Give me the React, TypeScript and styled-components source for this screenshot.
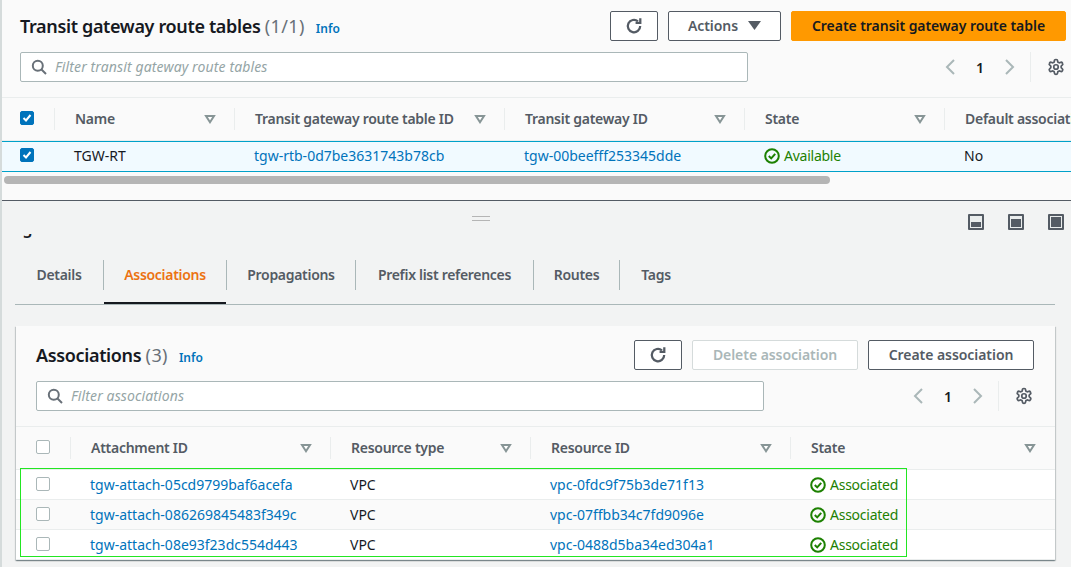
import React from "react";
import styled, { createGlobalStyle } from "styled-components";

const Global = createGlobalStyle`
  html, body { margin: 0; padding: 0; background: #f2f3f3; }
  body { font-family: "Noto Sans", "Open Sans", sans-serif; font-size: 14px; color: #16191f; }
`;

const Page = styled.div`
  position: relative;
  width: 1071px;
  height: 567px;
  overflow: hidden;
  background: #f2f3f3;
  border-left: 2px solid #d5dbdb;
  box-sizing: border-box;
`;

const TopPanel = styled.section`
  height: 201px;
  margin-left: -2px;
  box-sizing: border-box;
  background: #fafafa;
  border-bottom: 1px solid #545b64;
  border-left: 2px solid #d5dbdb;
  display: flex;
  flex-direction: column;
  overflow: hidden;
`;

const Header = styled.div<{ $pl: number; $pr: number; $pt: number }>`
  display: flex;
  align-items: center;
  justify-content: space-between;
  padding: ${(p) => p.$pt}px ${(p) => p.$pr}px 0 ${(p) => p.$pl}px;
  height: 30px;
`;

const TitleBlock = styled.div`
  display: flex;
  align-items: baseline;
  white-space: nowrap;
`;

const Title = styled.h2<{ $size: number }>`
  margin: 0;
  font-size: ${(p) => p.$size}px;
  line-height: 24px;
  font-weight: 600;
  letter-spacing: -0.35px;
  color: #16191f;
`;

const Count = styled.span`
  font-weight: 400;
  letter-spacing: 0.4px;
  color: #687078;
`;

const Info = styled.a`
  margin-left: 11px;
  font-size: 12px;
  font-weight: 600;
  color: #0073bb;
`;

const Actions = styled.div`
  display: flex;
  gap: 10px;
`;

const Button = styled.button<{ $w: number; $kind?: "primary" | "disabled" }>`
  width: ${(p) => p.$w}px;
  height: 30px;
  box-sizing: border-box;
  display: inline-flex;
  align-items: center;
  justify-content: center;
  gap: 10px;
  padding: 0 0 1px;
  font-family: inherit;
  font-size: 14px;
  font-weight: 600;
  letter-spacing: -0.05px;
  border-radius: 2px;
  border: 1px solid
    ${(p) => (p.$kind === "primary" ? "#ff9900" : p.$kind === "disabled" ? "#d5dbdb" : "#545b64")};
  background: ${(p) => (p.$kind === "primary" ? "#ff9900" : "#ffffff")};
  color: ${(p) => (p.$kind === "primary" ? "#16191f" : p.$kind === "disabled" ? "#aab7b8" : "#545b64")};
`;

const FilterRow = styled.div<{ $mt: number; $pl: number }>`
  display: flex;
  align-items: center;
  margin-top: ${(p) => p.$mt}px;
  padding-left: ${(p) => p.$pl}px;
  height: 30px;
`;

const FilterBox = styled.div`
  width: 728px;
  height: 30px;
  box-sizing: border-box;
  display: flex;
  align-items: center;
  gap: 8px;
  padding: 0 0 1px 10px;
  background: #ffffff;
  border: 1px solid #aab7b8;
  border-radius: 2px;
  font-style: italic;
  font-size: 14px;
  letter-spacing: 0.12px;
  color: #95a5a6;
`;

const Pager = styled.div<{ $ml: number }>`
  display: flex;
  align-items: center;
  height: 30px;
  margin-left: ${(p) => p.$ml}px;
`;

const PageNum = styled.span`
  width: 46px;
  text-align: center;
  font-weight: 600;
  color: #16191f;
`;

const PagerSep = styled.span`
  width: 1px;
  height: 30px;
  margin: 0 16px 0 13px;
  background: #eaeded;
`;

const Table = styled.div<{ $mt: number }>`
  margin-top: ${(p) => p.$mt}px;
  border-top: 1px solid #eaeded;
  overflow: hidden;
`;

const HeadRow = styled.div<{ $cols: string }>`
  display: grid;
  grid-template-columns: ${(p) => p.$cols};
  align-items: center;
  height: 42px;
  border-bottom: 1px solid #eaeded;
  background: #fafafa;
`;

const HeadCell = styled.div<{ $last?: boolean }>`
  display: flex;
  align-items: center;
  justify-content: space-between;
  height: 22px;
  box-sizing: border-box;
  padding: 0 18px 0 20px;
  border-right: ${(p) => (p.$last ? "none" : "1px solid #eaeded")};
  font-weight: 600;
  letter-spacing: -0.27px;
  color: #545b64;
  white-space: nowrap;
  line-height: 20px;
`;

const HeadLabel = styled.span`
  margin-top: -1px;
`;

const CheckCell = styled.div<{ $pl: number; $sep?: boolean }>`
  display: flex;
  align-items: center;
  height: 22px;
  box-sizing: border-box;
  padding-left: ${(p) => p.$pl}px;
  border-right: ${(p) => (p.$sep ? "1px solid #eaeded" : "none")};
`;

const Check = styled.span<{ $on?: boolean }>`
  display: inline-flex;
  align-items: center;
  justify-content: center;
  box-sizing: border-box;
  width: 14px;
  height: 14px;
  margin-top: -2px;
  border-radius: 2px;
  border: 1px solid ${(p) => (p.$on ? "#0073bb" : "#aab7b8")};
  background: ${(p) => (p.$on ? "#0073bb" : "#ffffff")};
`;

const BodyRow = styled.div<{ $cols: string; $selected?: boolean; $alt?: boolean; $h: number }>`
  display: grid;
  grid-template-columns: ${(p) => p.$cols};
  align-items: center;
  height: ${(p) => p.$h}px;
  box-sizing: border-box;
  padding-bottom: ${(p) => (p.$selected ? "1px" : "0")};
  background: ${(p) => (p.$selected ? "#f1faff" : p.$alt ? "#fafafa" : "#ffffff")};
  border-top: ${(p) => (p.$selected ? "1px solid #00a1c9" : "none")};
  border-bottom: 1px solid ${(p) => (p.$selected ? "#00a1c9" : "#eaeded")};
  border-left: ${(p) => (p.$selected ? "1px solid #00a1c9" : "none")};
  margin-left: ${(p) => (p.$selected ? "-1px" : "0")};
`;

const Cell = styled.div`
  padding-left: 19px;
  white-space: nowrap;
  line-height: 20px;
`;

const LinkText = styled.a`
  color: #0073bb;
`;

const Status = styled.span`
  display: inline-flex;
  align-items: center;
  gap: 4px;
  vertical-align: top;
  letter-spacing: -0.25px;
  color: #1d8102;
`;

const Track = styled.div`
  height: 8px;
  margin-top: 4px;
  padding-left: 2px;
`;

const Thumb = styled.div`
  width: 826px;
  height: 8px;
  border-radius: 4px;
  background: #b5b5b5;
`;

const Bottom = styled.section`
  padding-left: 13px;
`;

const HandleBar = styled.div`
  display: flex;
  align-items: center;
  height: 28px;
  padding-right: 7px;
`;

const Handle = styled.div`
  width: 18px;
  height: 3px;
  margin: 6px 0 0 457px;
  border-top: 1px solid #b5b5b5;
  border-bottom: 1px solid #b5b5b5;
`;

const ViewIcons = styled.div`
  margin-left: auto;
  display: flex;
  gap: 24px;
  margin-top: 14px;
`;

const Clip = styled.div`
  height: 4px;
  margin-top: 5px;
  overflow: hidden;
  padding-left: 1px;
`;

const ClipText = styled.div`
  margin-top: -16px;
  font-size: 16px;
  font-weight: 600;
  line-height: 20px;
  white-space: nowrap;
  color: #16191f;
`;

const Tabs = styled.div`
  display: flex;
  height: 44px;
  margin-top: 22px;
  border-bottom: 1px solid #aab7b8;
  width: 1040px;
`;

const Tab = styled.div<{ $active?: boolean; $w: number; $last?: boolean }>`
  position: relative;
  width: ${(p) => p.$w}px;
  height: 30px;
  box-sizing: border-box;
  display: flex;
  align-items: center;
  justify-content: center;
  padding-bottom: 1px;
  font-weight: 600;
  letter-spacing: -0.3px;
  color: ${(p) => (p.$active ? "#ec7211" : "#545b64")};
  border-right: ${(p) => (p.$last ? "none" : "1px solid #aab7b8")};
  white-space: nowrap;
  &::after {
    content: "";
    display: ${(p) => (p.$active ? "block" : "none")};
    position: absolute;
    left: 0;
    right: 0;
    top: 42px;
    height: 2px;
    background: #16191f;
  }
`;

const Card = styled.div`
  margin: 21px 0 0 1px;
  width: 1039px;
  height: 234px;
  background: #fafafa;
  box-shadow: 0 1px 1px 0 rgba(0, 28, 36, 0.3), 1px 1px 1px 0 rgba(0, 28, 36, 0.15),
    -1px 1px 1px 0 rgba(0, 28, 36, 0.15);
  overflow: hidden;
`;

const Highlight = styled.div`
  position: absolute;
  left: 18px;
  top: 468px;
  width: 887px;
  height: 89px;
  box-sizing: border-box;
  border: 1px solid #22e622;
  pointer-events: none;
`;

const RefreshIcon = () => (
  <svg width="18" height="18" viewBox="0 0 16 16" fill="none" stroke="#545b64" strokeWidth="2">
    <path d="M13.5 8a5.5 5.5 0 1 1-2-4.2" />
    <path d="M13.6 1v4.2H9.4" />
  </svg>
);

const SearchIcon = () => (
  <svg width="16" height="16" viewBox="0 0 16 16" fill="none" stroke="#687078" strokeWidth="2">
    <circle cx="6.8" cy="6.8" r="5" />
    <path d="M10.5 10.5 15 15" />
  </svg>
);

const Gear = () => (
  <svg width="18" height="18" viewBox="0 0 24 24" fill="none" stroke="#545b64" strokeWidth="2.3" strokeLinejoin="round">
    <path d="M12.2 2h-.4a2 2 0 0 0-2 2v.2a2 2 0 0 1-1 1.7l-.4.2a2 2 0 0 1-2 0l-.2-.1a2 2 0 0 0-2.7.7l-.2.4a2 2 0 0 0 .7 2.7l.2.1a2 2 0 0 1 1 1.7v.5a2 2 0 0 1-1 1.7l-.2.1a2 2 0 0 0-.7 2.7l.2.4a2 2 0 0 0 2.7.7l.2-.1a2 2 0 0 1 2 0l.4.2a2 2 0 0 1 1 1.7v.2a2 2 0 0 0 2 2h.4a2 2 0 0 0 2-2v-.2a2 2 0 0 1 1-1.7l.4-.2a2 2 0 0 1 2 0l.2.1a2 2 0 0 0 2.7-.7l.2-.4a2 2 0 0 0-.7-2.7l-.2-.1a2 2 0 0 1-1-1.7v-.5a2 2 0 0 1 1-1.7l.2-.1a2 2 0 0 0 .7-2.7l-.2-.4a2 2 0 0 0-2.7-.7l-.2.1a2 2 0 0 1-2 0l-.4-.2a2 2 0 0 1-1-1.7V4a2 2 0 0 0-2-2Z" />
    <circle cx="12" cy="12" r="3" />
  </svg>
);

const Chevron = ({ left }: { left?: boolean }) => (
  <svg width="14" height="18" viewBox="0 0 14 18" fill="none" stroke="#aab7b8" strokeWidth="2">
    <path d={left ? "M11 2 4 9l7 7" : "M3 2l7 7-7 7"} />
  </svg>
);

const SortIcon = () => (
  <svg width="12" height="10" viewBox="0 0 12 10" fill="#ffffff" stroke="#879596" strokeWidth="2" style={{ flex: "none" }}>
    <path d="M2 2h8L6 8.2Z" />
  </svg>
);

const Caret = () => (
  <svg width="13" height="9" viewBox="0 0 13 9" fill="#545b64">
    <path d="M0 0h13L6.5 9Z" />
  </svg>
);

const CheckMark = () => (
  <svg width="10" height="10" viewBox="0 0 10 10" fill="none" stroke="#ffffff" strokeWidth="2">
    <path d="M1.5 5 4 7.5 8.5 2" />
  </svg>
);

const OkIcon = () => (
  <svg width="16" height="16" viewBox="0 0 16 16" fill="none" stroke="#1d8102" strokeWidth="2">
    <circle cx="8" cy="8" r="6.8" />
    <path d="M4.8 8 7.2 10.4 11.2 5.8" />
  </svg>
);

const ViewIcon = ({ y }: { y: number }) => (
  <svg width="16" height="16" viewBox="0 0 16 16">
    <rect x="0" y="0" width="16" height="16" rx="1" fill="#545b64" />
    <rect x="2" y="2" width="12" height="12" fill="#eaeded" />
    <rect x="3" y={y} width="10" height={13 - y} fill="#545b64" />
  </svg>
);

const topCols = "53px 180px 270px 240px 200px 300px";
const botCols = "55px 260px 200px 260px 263px";

const assoc = [
  ["tgw-attach-05cd9799baf6acefa", "vpc-0fdc9f75b3de71f13"],
  ["tgw-attach-086269845483f349c", "vpc-07ffbb34c7fd9096e"],
  ["tgw-attach-08e93f23dc554d443", "vpc-0488d5ba34ed304a1"],
];

export default function App() {
  return (
    <>
      <Global />
      <Page>
        <TopPanel>
          <Header $pl={18} $pr={5} $pt={11}>
            <TitleBlock>
              <Title $size={18}>
                Transit gateway route tables <Count>(1/1)</Count>
              </Title>
              <Info>Info</Info>
            </TitleBlock>
            <Actions>
              <Button $w={48}>
                <RefreshIcon />
              </Button>
              <Button $w={113}>
                Actions <Caret />
              </Button>
              <Button $w={275} $kind="primary">
                Create transit gateway route table
              </Button>
            </Actions>
          </Header>
          <FilterRow $mt={11} $pl={18}>
            <FilterBox>
              <SearchIcon />
              Filter transit gateway route tables
            </FilterBox>
            <Pager $ml={195}>
              <Chevron left />
              <PageNum>1</PageNum>
              <Chevron />
              <PagerSep />
              <Gear />
            </Pager>
          </FilterRow>
          <Table $mt={15}>
            <HeadRow $cols={topCols}>
              <CheckCell $pl={18} $sep>
                <Check $on>
                  <CheckMark />
                </Check>
              </CheckCell>
              <HeadCell>
                <HeadLabel>Name</HeadLabel> <SortIcon />
              </HeadCell>
              <HeadCell>
                <HeadLabel>Transit gateway route table ID</HeadLabel> <SortIcon />
              </HeadCell>
              <HeadCell>
                <HeadLabel>Transit gateway ID</HeadLabel> <SortIcon />
              </HeadCell>
              <HeadCell>
                <HeadLabel>State</HeadLabel> <SortIcon />
              </HeadCell>
              <HeadCell $last>
                <HeadLabel>Default association route table</HeadLabel>
              </HeadCell>
            </HeadRow>
            <BodyRow $cols={topCols} $selected $h={31}>
              <CheckCell $pl={18}>
                <Check $on>
                  <CheckMark />
                </Check>
              </CheckCell>
              <Cell>TGW-RT</Cell>
              <Cell>
                <LinkText>tgw-rtb-0d7be3631743b78cb</LinkText>
              </Cell>
              <Cell>
                <LinkText>tgw-00beefff253345dde</LinkText>
              </Cell>
              <Cell>
                <Status>
                  <OkIcon />
                  Available
                </Status>
              </Cell>
              <Cell>No</Cell>
            </BodyRow>
          </Table>
          <Track>
            <Thumb />
          </Track>
        </TopPanel>
        <Bottom>
          <HandleBar>
            <Handle />
            <ViewIcons>
              <ViewIcon y={8} />
              <ViewIcon y={5} />
              <ViewIcon y={3} />
            </ViewIcons>
          </HandleBar>
          <Clip>
            <ClipText>tgw-rtb-0d7be3631743b78cb /</ClipText>
          </Clip>
          <Tabs>
            <Tab $w={89}>Details</Tab>
            <Tab $w={123} $active>
              Associations
            </Tab>
            <Tab $w={129}>Propagations</Tab>
            <Tab $w={178}>Prefix list references</Tab>
            <Tab $w={86}>Routes</Tab>
            <Tab $w={72} $last>
              Tags
            </Tab>
          </Tabs>
          <Card>
            <Header $pl={20} $pr={21} $pt={14}>
              <TitleBlock>
                <Title $size={18}>
                  Associations <Count>(3)</Count>
                </Title>
                <Info>Info</Info>
              </TitleBlock>
              <Actions>
                <Button $w={48}>
                  <RefreshIcon />
                </Button>
                <Button $w={166} $kind="disabled">
                  Delete association
                </Button>
                <Button $w={166}>Create association</Button>
              </Actions>
            </Header>
            <FilterRow $mt={11} $pl={20}>
              <FilterBox>
                <SearchIcon />
                Filter associations
              </FilterBox>
              <Pager $ml={147}>
                <Chevron left />
                <PageNum>1</PageNum>
                <Chevron />
                <PagerSep />
                <Gear />
              </Pager>
            </FilterRow>
            <Table $mt={15}>
              <HeadRow $cols={botCols}>
                <CheckCell $pl={20} $sep>
                  <Check />
                </CheckCell>
                <HeadCell>
                  <HeadLabel>Attachment ID</HeadLabel> <SortIcon />
                </HeadCell>
                <HeadCell>
                  <HeadLabel>Resource type</HeadLabel> <SortIcon />
                </HeadCell>
                <HeadCell>
                  <HeadLabel>Resource ID</HeadLabel> <SortIcon />
                </HeadCell>
                <HeadCell $last>
                  <HeadLabel>State</HeadLabel> <SortIcon />
                </HeadCell>
              </HeadRow>
              {assoc.map(([a, v], i) => (
                <BodyRow key={a} $cols={botCols} $alt={i === 1} $h={30}>
                  <CheckCell $pl={20}>
                    <Check />
                  </CheckCell>
                  <Cell>
                    <LinkText>{a}</LinkText>
                  </Cell>
                  <Cell>VPC</Cell>
                  <Cell>
                    <LinkText>{v}</LinkText>
                  </Cell>
                  <Cell>
                    <Status>
                      <OkIcon />
                      Associated
                    </Status>
                  </Cell>
                </BodyRow>
              ))}
            </Table>
          </Card>
        </Bottom>
        <Highlight />
      </Page>
    </>
  );
}
